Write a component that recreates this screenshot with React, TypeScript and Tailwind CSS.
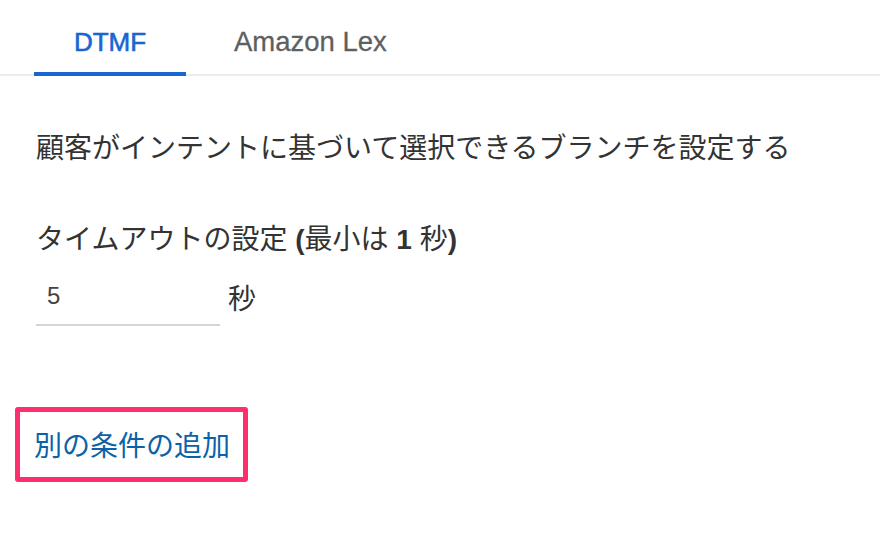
export default function App() {
  return (
    <div
      className="w-[894px] h-[546px] bg-white text-[#333333]"
      style={{ fontFamily: '"Liberation Sans", "Noto Sans CJK JP", sans-serif' }}
    >
      <div className="w-[880px]">
        {/* tabs */}
        <div className="flex h-[76px] border-b-2 border-[#eaeded] pl-[34px]">
          <div className="relative flex w-[152px] items-center justify-center pt-[10px] text-[26px] text-[#1a66d0]">
            <span className="[-webkit-text-stroke:0.6px_#1a66d0]">DTMF</span>
            <div className="absolute bottom-[-2px] left-0 right-0 h-[4px] bg-[#1a66d0]" />
          </div>
          <div className="ml-[48px] flex items-center pt-[10px] text-[27.5px] text-[#5f5f5f] [-webkit-text-stroke:0.3px_#5f5f5f]">
            Amazon Lex
          </div>
        </div>

        <div className="pl-[36px]">
          <p className="mt-[55px] text-[28px] leading-[36px]">
            顧客がインテントに基づいて選択できるブランチを設定する
          </p>

          <p className="mt-[55px] text-[28px] leading-[36px]">
            タイムアウトの設定 <span className="font-bold">(</span>最小は <span className="font-bold">1</span> 秒<span className="font-bold">)</span>
          </p>

          <div className="mt-[16px] flex items-end">
            <div className="flex h-[52px] w-[184px] items-center border-b-2 border-[#d5d5d5] pb-[6px] pl-[11px] text-[24px] text-[#444]">
              5
            </div>
            <span className="mb-[6px] ml-[8px] text-[28px] leading-[40px]">秒</span>
          </div>
        </div>

        <div className="ml-[15px] mt-[81px] flex h-[75px] w-[233px] items-center rounded-[3px] border-[5px] border-[#ff2f6e] pl-[14px] pt-[5px]">
          <span className="text-[28px] leading-[36px] text-[#0b62a8]">別の条件の追加</span>
        </div>
      </div>
    </div>
  );
}
